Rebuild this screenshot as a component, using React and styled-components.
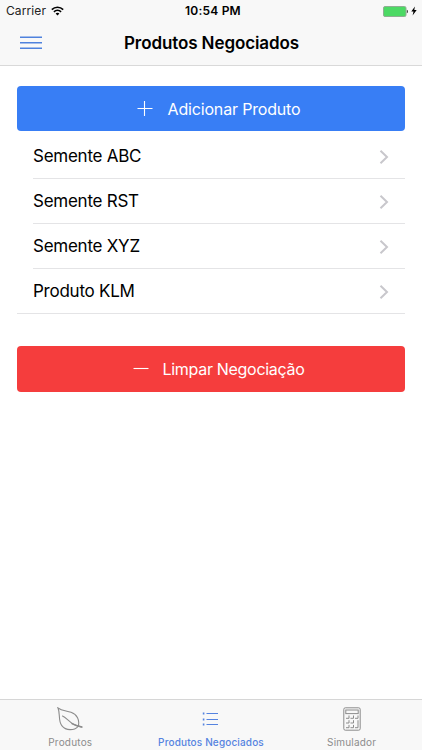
import React, { useState } from 'react'
import styled, { createGlobalStyle } from 'styled-components'

const GlobalStyle = createGlobalStyle`
* {
    box-sizing: border-box;
}
body {
    margin: 0;
    background-color: #ffffff;
    font-family: Inter, "Liberation Sans", sans-serif;
}
`;
const Page = styled.div`
    height: 100vh;
    display: flex;
    flex-direction: column;
    overflow: hidden;
    color: #000000;
`;
const Header = styled.header`
    height: 66px;
    background-color: #f8f8f8;
    border-bottom: 1px solid #d9d9d9;
`;
const StatusBar = styled.div`
    height: 22px;
    padding: 0 5px 0 6px;
    display: grid;
    grid-template-columns: 1fr auto 1fr;
    align-items: center;
    font-size: 12px;
    line-height: 22px;
`;
const Carrier = styled.div`
    display: flex;
    align-items: center;
    gap: 5px;
    letter-spacing: 0.1px;
    color: #222222;
`;
const Clock = styled.div`
    padding-left: 3px;
    font-weight: 600;
    letter-spacing: 0.2px;
`;
const Power = styled.div`
    display: flex;
    align-items: center;
    justify-content: flex-end;
    gap: 3px;
`;
const NavBar = styled.div`
    height: 43px;
    padding: 0 20px;
    display: grid;
    grid-template-columns: 22px 1fr 22px;
    align-items: center;
`;
const MenuBtn = styled.button`
    padding: 0 0 2px;
    border: 0;
    background: none;
    display: flex;
`;
const Title = styled.h1`
    margin: 0;
    padding-left: 1px;
    text-align: center;
    white-space: nowrap;
    font-size: 17px;
    font-weight: 600;
    line-height: 43px;
    letter-spacing: -0.1px;
`;
const Content = styled.main`
    flex: 1;
    padding: 20px 17px 0 17px;
`;
const ActionBtn = styled.button`
    width: 100%;
    height: ${props => props.$danger ? "46px" : "45px"};
    padding: 0 0 0 15px;
    border: 0;
    border-radius: 4px;
    display: flex;
    align-items: center;
    justify-content: center;
    gap: ${props => props.$danger ? "14px" : "15px"};
    color: #ffffff;
    background-color: ${props => props.$danger ? "#f53d3d" : "#387ef5"};
    font-family: inherit;
    font-size: 16px;
    letter-spacing: ${props => props.$danger ? "-0.3px" : "-0.17px"};
`;
const ProductList = styled.ul`
    margin: 3.6px 0 32px;
    padding: 0 0 0 16px;
    list-style: none;
    border-bottom: 1px solid #e4e4e6;
`;
const ProductItem = styled.li`
    height: 44.7px;
    padding: 2px 16px 0 0;
    display: flex;
    align-items: center;
    justify-content: space-between;
    border-bottom: 1px solid #e4e4e6;
    &:last-child {
        border-bottom: 0;
    }
`;
const ProductName = styled.span`
    padding-bottom: 2px;
    font-size: 17px;
    line-height: 22px;
    letter-spacing: -0.25px;
`;
const TabBar = styled.nav`
    height: 51px;
    display: grid;
    grid-template-columns: repeat(3, 1fr);
    background-color: #f8f8f8;
    border-top: 1px solid #d6d6d6;
`;
const Tab = styled.div`
    padding-top: 7px;
    display: flex;
    flex-direction: column;
    align-items: center;
    gap: 4px;
    color: ${props => props.$active ? "#5583e0" : "#8c8c8c"};
`;
const TabLabel = styled.span`
    font-size: 10px;
    line-height: 14px;
    white-space: nowrap;
    letter-spacing: ${props => props.$active ? "0.15px" : "0.2px"};
    font-weight: ${props => props.$active ? 500 : 400};
`;

function WifiIcon() {
    return (
    <svg width="13" height="10" viewBox="0 0 13 10" fill="none" stroke="#000" strokeWidth="1.6">
        <path d="M0.8 3.6C4 0.4 9 0.4 12.2 3.6" />
        <path d="M2.9 5.8C5 3.8 8 3.8 10.1 5.8" />
        <path d="M6.5 9.4L4.6 7.4C5.7 6.4 7.3 6.4 8.4 7.4Z" fill="#000" stroke="none" />
    </svg>
    )
}

function BatteryIcon() {
    return (
    <svg width="25" height="11" viewBox="0 0 25 11">
        <rect x="0.5" y="0.5" width="22.5" height="10" rx="1.5" fill="#4cd964" stroke="#8fae92" />
        <path d="M23.8 3.8Q25 4 25 5.5T23.8 7.2Z" fill="#444" />
    </svg>
    )
}

function BoltIcon() {
    return (
    <svg width="6" height="10" viewBox="0 0 6 9">
        <path d="M3.9 0L0.3 5H2.5L1.6 9L5.7 3.6H3.3Z" fill="#000" />
    </svg>
    )
}

function MenuIcon() {
    return (
    <svg width="22" height="14" viewBox="0 0 22 14" stroke="#4f82dd" strokeWidth="1.6">
        <path d="M0 1.2H22M0 6.8H22M0 12.2H22" />
    </svg>
    )
}

function SignIcon({plus}) {
    return (
    <svg width="16" height="16" viewBox="0 0 16 16" stroke="#fff" strokeWidth="1.1">
        <path d={plus ? "M0.5 7.5H15.5M7.5 0V15" : "M0.5 7.5H15.5"} />
    </svg>
    )
}

function ChevronIcon() {
    return (
    <svg width="10" height="14" viewBox="0 0 10 14" fill="none" stroke="#c8c7cc" strokeWidth="2">
        <path d="M1.5 0.8L8 7L1.5 13.2" />
    </svg>
    )
}

function LeafIcon() {
    return (
    <svg width="26" height="24" viewBox="0 0 26 24" fill="none" stroke="currentColor" strokeWidth="1.1" strokeLinecap="round">
        <path d="M1 1C5 4 9 3.6 14 5.3C20 7.3 23 13 21.2 19.3C17.3 23.6 9 24.2 4.8 18.6C0.8 13.3 3.6 7 1 1Z" />
        <path d="M5.5 9C9 10.3 11.8 14.8 16.5 17.2C19.5 18.8 21.8 19.2 24.8 20" />
        <path d="M15 16.7C18.3 18.4 21 19.2 24.8 20.1" strokeWidth="1.5" />
    </svg>
    )
}

function ListIcon() {
    return (
    <svg width="17" height="24" viewBox="0 0 17 24" stroke="currentColor" strokeWidth="1.2">
        <path d="M4.5 6.5H16M4.5 12.5H16M4.5 17.5H16" />
        <path d="M0.8 6.5H2.4M0.8 12.5H2.4M0.8 17.5H2.4" strokeWidth="1.8" />
    </svg>
    )
}

function CalculatorIcon() {
    return (
    <svg width="18" height="24" viewBox="0 0 18 24" fill="none" stroke="currentColor" strokeWidth="1">
        <rect x="0.8" y="0.8" width="16.4" height="22.4" rx="1.5" />
        <rect x="2.8" y="3" width="12.4" height="3.6" />
        <path d="M3 11.3H6V8.5M7.5 11.3H10.5V8.5M12 11.3H15V8.5" />
        <path d="M3 16H6V13.2M7.5 16H10.5V13.2" />
        <path d="M3 20.7H6V17.9M7.5 20.7H10.5V17.9M12 20.7H15V13.2" />
    </svg>
    )
}

const tabs = [
    {name: 'Produtos', icon: <LeafIcon />},
    {name: 'Produtos Negociados', icon: <ListIcon />},
    {name: 'Simulador', icon: <CalculatorIcon />},
];

export default function App() {
    const [products, setProducts] = useState(['Semente ABC', 'Semente RST', 'Semente XYZ', 'Produto KLM']);
    const [active, setActive] = useState(1);
    return (
    <Page>
        <GlobalStyle />
        <Header>
            <StatusBar>
                <Carrier>Carrier <WifiIcon /></Carrier>
                <Clock>10:54 PM</Clock>
                <Power><BatteryIcon /><BoltIcon /></Power>
            </StatusBar>
            <NavBar>
                <MenuBtn><MenuIcon /></MenuBtn>
                <Title>Produtos Negociados</Title>
            </NavBar>
        </Header>
        <Content>
            <ActionBtn><SignIcon plus />Adicionar Produto</ActionBtn>
            <ProductList>
                {products.map(name => (
                    <ProductItem key={name}>
                        <ProductName>{name}</ProductName>
                        <ChevronIcon />
                    </ProductItem>
                ))}
            </ProductList>
            <ActionBtn $danger onClick={()=>{setProducts([])}}><SignIcon />Limpar Negociação</ActionBtn>
        </Content>
        <TabBar>
            {tabs.map((tab, i) => (
                <Tab key={tab.name} $active={i === active} onClick={()=>{setActive(i)}}>
                    {tab.icon}
                    <TabLabel $active={i === active}>{tab.name}</TabLabel>
                </Tab>
            ))}
        </TabBar>
    </Page>
    )
}
